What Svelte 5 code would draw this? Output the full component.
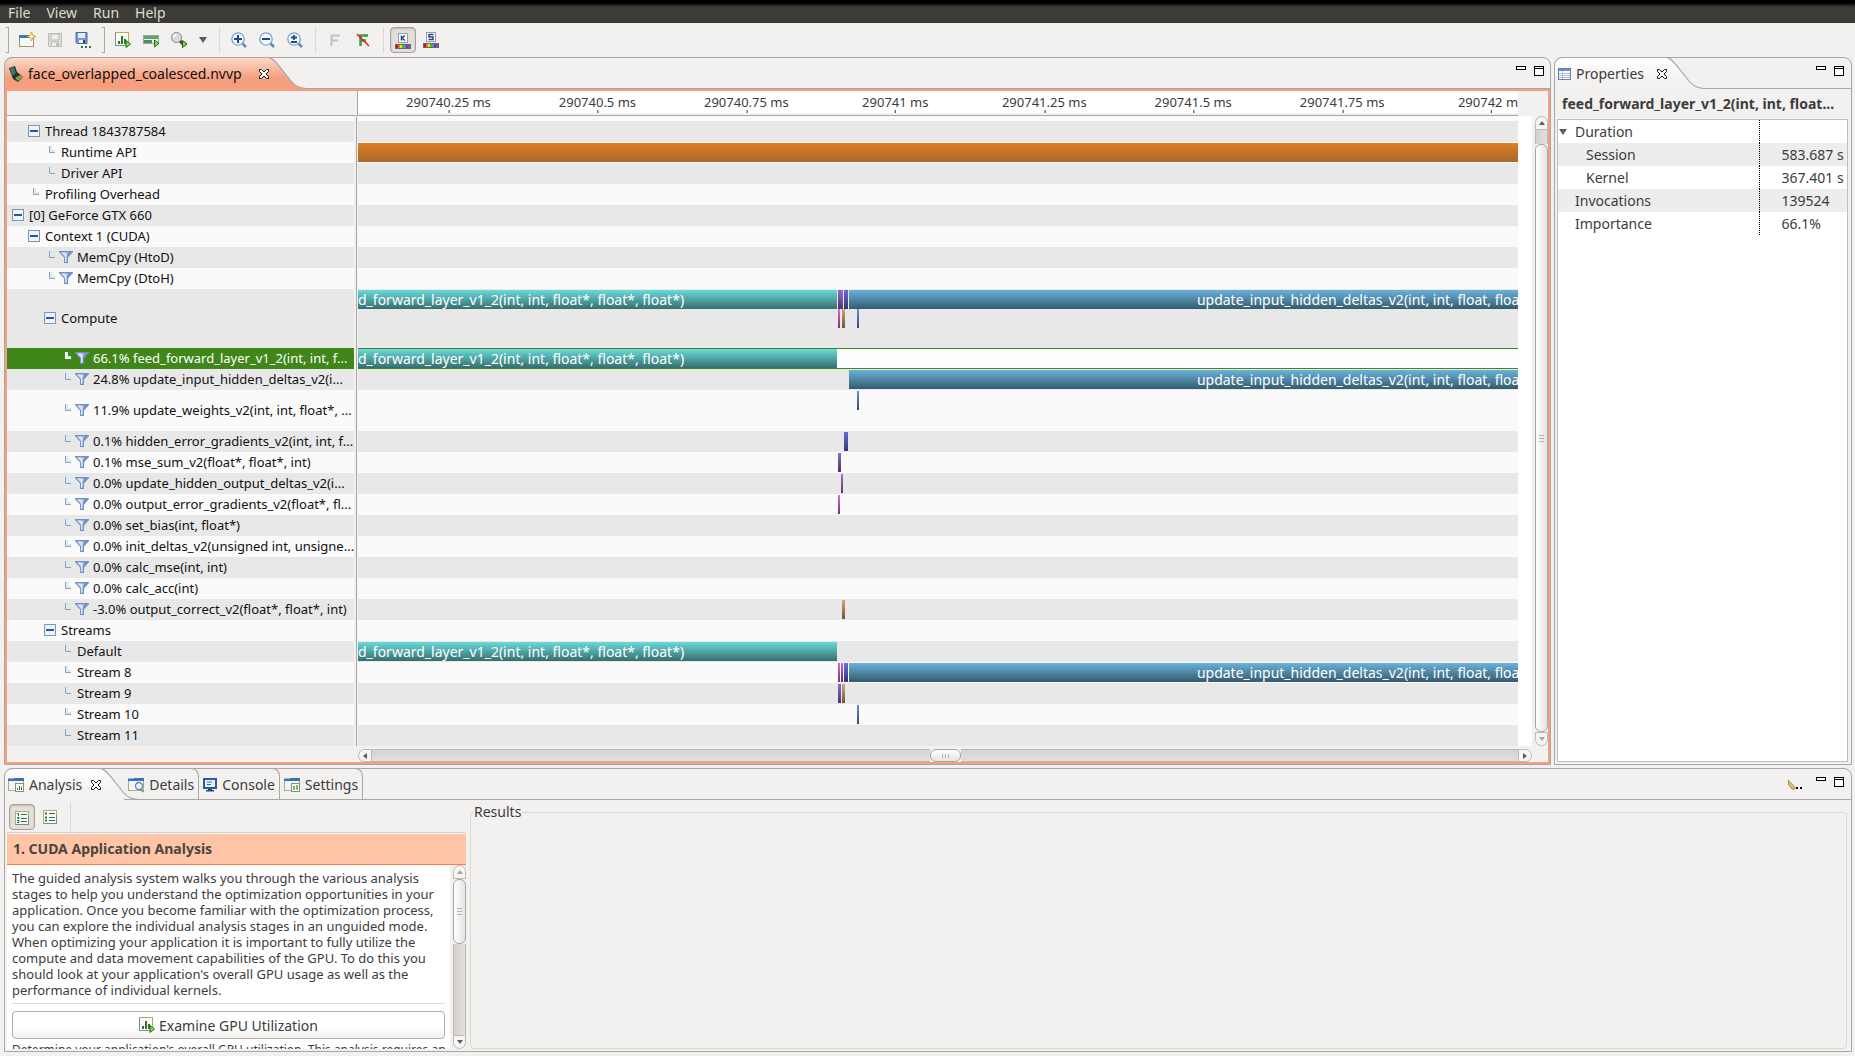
<script>
  const menus = ['File', 'View', 'Run', 'Help'];

  const span = 1160;
  const pct = (px) => (px / span) * 100;

  const fwd = { from: 0, to: 479, tone: 'teal', label: 'd_forward_layer_v1_2(int, int, float*, float*, float*)', align: 'start' };
  const upd = { from: 491, to: 1160, tone: 'blue', label: 'update_input_hidden_deltas_v2(int, int, float, float*, float*)', align: 'middle' };
  const bar = (from, to, tone, lane = 0) => ({ from, to, tone, lane });

  const rows = [
    { level: 1, text: 'Thread 1843787584', twisty: true },
    { level: 2, text: 'Runtime API', bars: [bar(0, 1160, 'orange')] },
    { level: 2, text: 'Driver API' },
    { level: 1, text: 'Profiling Overhead' },
    { level: 0, text: '[0] GeForce GTX 660', twisty: true },
    { level: 1, text: 'Context 1 (CUDA)', twisty: true },
    { level: 2, text: 'MemCpy (HtoD)', filter: true },
    { level: 2, text: 'MemCpy (DtoH)', filter: true },
    {
      level: 2, text: 'Compute', twisty: true, size: 'triple',
      bars: [fwd, bar(480, 483, 'purple'), bar(483, 485, 'violet'), bar(486, 490, 'indigo'), upd,
        bar(480, 482, 'pink', 1), bar(484, 487, 'tan', 1), bar(499, 501, 'steel', 1)]
    },
    { level: 3, text: '66.1% feed_forward_layer_v1_2(int, int, f...', filter: true, selected: true, bars: [fwd] },
    { level: 3, text: '24.8% update_input_hidden_deltas_v2(i...', filter: true, bars: [upd] },
    { level: 3, text: '11.9% update_weights_v2(int, int, float*, ...', filter: true, size: 'double', bars: [bar(499, 501, 'steel')] },
    { level: 3, text: '0.1% hidden_error_gradients_v2(int, int, f...', filter: true, bars: [bar(486, 490, 'indigo')] },
    { level: 3, text: '0.1% mse_sum_v2(float*, float*, int)', filter: true, bars: [bar(480, 483, 'purple')] },
    { level: 3, text: '0.0% update_hidden_output_deltas_v2(i...', filter: true, bars: [bar(483, 485, 'violet')] },
    { level: 3, text: '0.0% output_error_gradients_v2(float*, fl...', filter: true, bars: [bar(480, 482, 'pink')] },
    { level: 3, text: '0.0% set_bias(int, float*)', filter: true },
    { level: 3, text: '0.0% init_deltas_v2(unsigned int, unsigne...', filter: true },
    { level: 3, text: '0.0% calc_mse(int, int)', filter: true },
    { level: 3, text: '0.0% calc_acc(int)', filter: true },
    { level: 3, text: '-3.0% output_correct_v2(float*, float*, int)', filter: true, bars: [bar(484, 487, 'tan')] },
    { level: 2, text: 'Streams', twisty: true },
    { level: 3, text: 'Default', bars: [fwd] },
    { level: 3, text: 'Stream 8', bars: [bar(480, 482, 'pink'), bar(483, 485, 'violet'), bar(486, 490, 'indigo'), upd] },
    { level: 3, text: 'Stream 9', bars: [bar(480, 483, 'purple'), bar(484, 487, 'tan')] },
    { level: 3, text: 'Stream 10', bars: [bar(499, 501, 'steel')] },
    { level: 3, text: 'Stream 11' }
  ];

  const ticks = ['290740.25 ms', '290740.5 ms', '290740.75 ms', '290741 ms', '290741.25 ms', '290741.5 ms', '290741.75 ms', '290742 ms'];

  const properties = [
    { name: 'Duration', value: '', kind: 'group' },
    { name: 'Session', value: '583.687 s', kind: 'child' },
    { name: 'Kernel', value: '367.401 s', kind: 'child' },
    { name: 'Invocations', value: '139524', kind: '' },
    { name: 'Importance', value: '66.1%', kind: '' }
  ];

  const rainbow = ['#d01010', '#f07818', '#f8e010', '#30c818', '#18b0c8', '#b81890', '#7858a8'];
</script>

{#snippet windowIcon(kind)}
  <svg class="icon" width="16" height="16" viewBox="0 0 16 16">
    <rect x=".5" y="1.5" width="15" height="12" fill="#eef6fd" stroke="#b9a878" />
    <rect x="0" y="1" width="16" height="3" fill="#3a72b4" />
    <rect x="0" y="1" width="6" height="1" fill="#8fb8e0" />
    {#if kind === 'search'}
      <circle cx="11" cy="9" r="3.5" fill="#e8f4ff" stroke="#5d86b4" stroke-width="1.3" />
      <path d="M13 12l2.5 3" stroke="#5d86b4" stroke-width="1.8" />
    {:else}
      <rect x="7.5" y="6.5" width="8" height="8" fill="#fff" stroke="#8a9078" />
      {#if kind === 'bars'}
        <path d="M9.5 13v-2M11.5 13V9M13.5 13v-3" stroke="#2f7a3c" />
      {:else}
        <path d="M10 13V9M13 13V8" stroke="#4d9a2c" stroke-width="1.4" />
      {/if}
    {/if}
  </svg>
{/snippet}

{#snippet chartIcon()}
  <svg class="icon" width="16" height="16" viewBox="0 0 16 16">
    <rect x=".5" y=".5" width="13" height="13" fill="#fbfcf4" stroke="#b3a468" />
    <path d="M.5 14V1M1 13.500h12" stroke="#7e8c98" />
    <path d="M3 9h2v3H3zM6 4h2v8H6zM9 7h2v5H9z" fill="#2c7434" />
    <path d="M11 8.500l4.500 3.500-4.500 3.500z" fill="#7ee040" stroke="#1c7a10" />
  </svg>
{/snippet}

{#snippet closeIcon()}
  <svg width="10" height="10" viewBox="0 0 10 10">
    <path d="M.5.500h2L5 3 7.500.500h2v2L7 5l2.500 2.500v2h-2L5 7 2.500 9.500h-2v-2L3 5 .500 2.500z" fill="#fff" stroke="#111" />
  </svg>
{/snippet}

{#snippet windowButtons()}
  <button class="plain" aria-label="Minimize">
    <svg width="10" height="10" viewBox="0 0 10 10"><rect x=".5" y=".5" width="9" height="3" fill="#fff" stroke="#000" /></svg>
  </button>
  <button class="plain" aria-label="Maximize">
    <svg width="10" height="10" viewBox="0 0 10 10"><rect x=".5" y=".5" width="9" height="9" fill="#fff" stroke="#000" /><path d="M0 2.500h10" stroke="#000" /></svg>
  </button>
{/snippet}

{#snippet curve(hot)}
  <svg class="curve" width="38" height="32" viewBox="0 0 38 32">
    <defs>
      <linearGradient id={hot ? 'tab-hot' : 'tab-cool'} x1="0" y1="0" x2="0" y2="1">
        <stop offset="0" stop-color={hot ? '#fbd9cb' : '#ffffff'} />
        <stop offset=".65" stop-color={hot ? '#f59f7f' : '#f4f3f2'} />
        <stop offset="1" stop-color={hot ? '#f59f7f' : '#f2f1f0'} />
      </linearGradient>
    </defs>
    <path d="M0 .5C5 2 8 7 10 9L22 24C26 29 31 31.500 38 31.500V32H0z" fill="url(#{hot ? 'tab-hot' : 'tab-cool'})" />
    <path d="M0 .5C5 2 8 7 10 9L22 24C26 29 31 31.500 38 31.500" fill="none" stroke="#a9a7a4" stroke-width="1.2" />
  </svg>
{/snippet}

{#snippet zoomIcon(kind)}
  <svg class="icon" width="16" height="16" viewBox="0 0 16 16">
    <path d="M11 11l4 4" stroke="#5c8cc0" stroke-width="2.500" />
    <circle cx="7" cy="7" r="6.200" fill="#f4faff" stroke="#7aa4d4" stroke-width="1.300" />
    {#if kind === 'in'}<path d="M3 7h8M7 3v8" stroke="#1f4a8c" stroke-width="2" />{/if}
    {#if kind === 'out'}<path d="M3 7h8" stroke="#1f4a8c" stroke-width="2" />{/if}
    {#if kind === 'fit'}<path d="M4 5.500h6M7 3v5M4 10h6" stroke="#1f4a8c" stroke-width="1.800" />{/if}
  </svg>
{/snippet}

{#snippet colourIcon(path)}
  <svg class="icon" width="16" height="16" viewBox="0 0 16 16">
    <rect x="3.500" y=".5" width="9" height="9" fill="#fffdf0" stroke="#8ea0b4" />
    <path d={path} fill="none" stroke="#24488c" stroke-width="1.500" />
    <rect x="0" y="11" width="16" height="5" fill="#6a6484" />
    {#each rainbow as colour, i}
      <rect x={1 + i * 2} y="12" width="2" height="3" fill={colour} />
    {/each}
  </svg>
{/snippet}

{#snippet listIcon(numbered)}
  <svg class="icon" width="14" height="14" viewBox="0 0 14 14">
    <rect x=".5" y=".5" width="13" height="13" fill="#f6fafd" stroke="#b9a860" />
    <path d="M.5 13.500h13V5" fill="none" stroke="#7a8a8c" />
    <path d="M6 3.500h6M6 7.500h6M6 10.500h6" stroke="#2f7a44" />
    {#if numbered}
      <path d="M2 2.500h1.500V5M2 6.500h2v1H2.500M2 9.500h2v2H2" fill="none" stroke="#2f7a44" />
    {:else}
      <path d="M2 3.500h2M2 7.500h2M2 10.500h2" stroke="#2f7a44" stroke-width="2" />
    {/if}
  </svg>
{/snippet}

{#snippet arrow(dir, dim)}
  <span class="arrow {dir}" class:dim></span>
{/snippet}

<div class="app">
  <nav class="menubar">
    {#each menus as menu}<button class="plain">{menu}</button>{/each}
  </nav>

  <div class="toolbar" role="toolbar" aria-label="Main">
    <span class="handle"></span>
    <button class="tool" aria-label="New session">
      <svg class="icon" width="17" height="16" viewBox="0 0 17 16">
        <rect x=".5" y="3.500" width="14" height="11" fill="#f3f8fd" stroke="#a89458" />
        <rect x="0" y="3" width="11" height="3" fill="#3a78b8" />
        <path d="M12.500 0l1.200 3.300L17 4.500l-3.300 1.200L12.500 9l-1.200-3.300L8 4.500l3.300-1.200z" fill="#fff6c8" stroke="#c49a28" stroke-width=".8" />
      </svg>
    </button>
    <button class="tool" aria-label="Save" disabled>
      <svg class="icon" width="16" height="16" viewBox="0 0 16 16">
        <path d="M1.500 1.500h13v13h-12l-1-1z" fill="#dddcda" stroke="#bdbbb8" />
        <path d="M4 2h8v6H4zM4.500 10h7v4.500h-7z" fill="#efeeec" stroke="#bdbbb8" />
        <path d="M9 11h2v3H9z" fill="#bdbbb8" />
      </svg>
    </button>
    <button class="tool" aria-label="Save as">
      <svg class="icon" width="17" height="16" viewBox="0 0 17 16">
        <path d="M1 .5h11v11H2l-1-1z" fill="#7d9bcc" stroke="#4a6aa6" />
        <path d="M3 1h7v5H3z" fill="#e4ecf7" /><path d="M4 8h6v3H4z" fill="#f4f7fa" /><path d="M8 8h2v3H8z" fill="#24406c" />
        <path d="M6 14h2v2H6zM10 14h2v2h-2zM14 14h2v2h-2z" fill="#2e7a34" />
      </svg>
    </button>
    <span class="handle second"></span>
    <button class="tool" aria-label="Profile application">{@render chartIcon()}</button>
    <button class="tool" aria-label="Timeline run">
      <svg class="icon" width="17" height="16" viewBox="0 0 17 16">
        <rect x=".5" y="3.500" width="15" height="8" fill="#f5f5f5" stroke="#9aa4a8" />
        <rect x="1" y="4" width="14" height="3" fill="#5ea568" /><rect x="1" y="8" width="8" height="3" fill="#4c8f58" />
        <path d="M11.500 8l4.500 3.500-4.500 3.500z" fill="#7ee040" stroke="#1c7a10" />
      </svg>
    </button>
    <button class="tool" aria-label="Analyze">
      <svg class="icon" width="17" height="16" viewBox="0 0 17 16">
        <path d="M9 9l3 3" stroke="#4a4238" stroke-width="3" />
        <circle cx="5.500" cy="5.500" r="5" fill="#dcdcdc" stroke="#858585" />
        <path d="M2.500 5.500a3 3 0 0 1 3-3" fill="none" stroke="#fff" stroke-width="1.500" />
        <path d="M11.500 8.500l4.500 3.500-4.500 3.500z" fill="#7ee040" stroke="#1c5a10" />
      </svg>
    </button>
    <button class="tool drop" aria-label="Analyze options">{@render arrow('down', false)}</button>
    <span class="rule"></span>
    <button class="tool" aria-label="Zoom in">{@render zoomIcon('in')}</button>
    <button class="tool" aria-label="Zoom out">{@render zoomIcon('out')}</button>
    <button class="tool" aria-label="Zoom to fit">{@render zoomIcon('fit')}</button>
    <span class="rule"></span>
    <button class="tool" aria-label="Filter" disabled>
      <svg class="icon" width="12" height="14" viewBox="0 0 12 14"><path d="M2.500 13V2.500H11M2.500 7.500H9" fill="none" stroke="#c4c2bf" stroke-width="2" /></svg>
    </button>
    <button class="tool" aria-label="Clear filter">
      <svg class="icon" width="14" height="14" viewBox="0 0 14 14"><path d="M4.500 13V2.500H12M4.500 7.500H10" fill="none" stroke="#3a9a44" stroke-width="2.500" /><path d="M1 1l12 12" stroke="#f01414" stroke-width="1.500" /></svg>
    </button>
    <span class="rule"></span>
    <button class="tool pressed" aria-label="Colour by kernel" aria-pressed="true">{@render colourIcon('M6.500 2.500v5M10 2.500L7 5l3 2.500')}</button>
    <button class="tool" aria-label="Colour by stream">{@render colourIcon('M10.500 2.500H6V5h4v2.500H5.500')}</button>
  </div>

  <main class="upper">
    <section class="folder editor">
      <header class="tabs">
        <div class="tab hot">
          <svg class="icon" width="14" height="16" viewBox="0 0 14 16">
            <path d="M0 2l6-2 2 6 6 5-5 5-5-3z" fill="#1f3434" /><path d="M1 2l4-1 2 6-4 3z" fill="#3f7468" /><path d="M9 15l5-4-3-2-5 3z" fill="#86a040" />
          </svg>
          <span class="title">face_overlapped_coalesced.nvvp</span>
          <button class="plain" aria-label="Close">{@render closeIcon()}</button>
        </div>
        {@render curve(true)}
        <div class="rest">{@render windowButtons()}</div>
      </header>

      <div class="editor-body">
        <div class="corner"></div>
        <div class="ruler">
          {#each ticks as tick, i}
            <span class="tick" style="left: {7.8 + i * 12.84}%">{tick}</span>
          {/each}
        </div>
        <ul class="tree">
          {#each rows as row}
            <li class="row {row.size ?? ''} level-{row.level}" class:selected={row.selected}>
              {#if row.twisty}
                <button class="plain twisty" aria-label="Collapse {row.text}"></button>
              {:else}
                <svg class="leaf" width="7" height="7" viewBox="0 0 7 7">
                  <path d="M1 0h2v4h3v2H1z" fill="#d8ebf5" />
                  <path d="M.5 0v6.500H6" fill="none" stroke={row.selected ? '#fff' : '#8fa3ba'} />
                </svg>
              {/if}
              {#if row.filter}
                <svg class="funnel" width="14" height="12" viewBox="0 0 14 12">
                  <path d="M0 0h14v1L9 6.500V12H5V6.500L0 1z" fill="#7191c4" />
                  <path d="M2 1.500h7L7.500 6v5H6V6z" fill="#c6d8ef" />
                  <path d="M3 2h3l.8 4.500V10" fill="none" stroke="#f2f7fd" stroke-width=".8" />
                </svg>
              {/if}
              <span>{row.text}</span>
            </li>
          {/each}
        </ul>
        <div class="sash"></div>
        <div class="lanes">
          {#each rows as row}
            <div class="row {row.size ?? ''}" class:selected={row.selected}>
              {#each row.bars ?? [] as b}
                <div class="bar {b.tone}" class:second-lane={b.lane === 1} style="left: {pct(b.from)}%; width: {pct(b.to - b.from)}%">
                  {#if b.label}<span class="label {b.align}">{b.label}</span>{/if}
                </div>
              {/each}
            </div>
          {/each}
        </div>
        <div class="gutter"></div>
        <div class="scroll vertical">
          <span class="cap">{@render arrow('up', false)}</span>
          <span class="trough short"></span>
          <span class="thumb long"><i></i></span>
          <span class="cap">{@render arrow('down', true)}</span>
        </div>
        <div class="scroll horizontal">
          <span class="cap">{@render arrow('left', false)}</span>
          <span class="trough"></span>
          <span class="thumb"><i></i></span>
          <span class="trough"></span>
          <span class="cap">{@render arrow('right', false)}</span>
        </div>
      </div>
    </section>

    <section class="folder properties">
      <header class="tabs">
        <div class="tab">
          <svg class="icon" width="13" height="12" viewBox="0 0 13 12">
            <rect x=".5" y=".5" width="12" height="11" fill="#fff" stroke="#6a80a8" /><rect x="1" y="1" width="11" height="2" fill="#6f8cc0" />
            <path d="M1 5.500h11M1 7.500h11M1 9.500h11M4.500 3v8" stroke="#a8bada" />
          </svg>
          <span class="title">Properties</span>
          <button class="plain" aria-label="Close">{@render closeIcon()}</button>
        </div>
        {@render curve(false)}
        <div class="rest">{@render windowButtons()}</div>
      </header>
      <h2>feed_forward_layer_v1_2(int, int, float...</h2>
      <div class="sheet">
        <table>
          <tbody>
            {#each properties as p}
              <tr>
                <th scope="row" class={p.kind}>{#if p.kind === 'group'}{@render arrow('down', false)}{/if}<span>{p.name}</span></th>
                <td>{p.value}</td>
              </tr>
            {/each}
          </tbody>
        </table>
      </div>
    </section>
  </main>

  <section class="folder lower">
    <header class="tabs">
      <div class="tab">
        {@render windowIcon('bars')}
        <span class="title">Analysis</span>
        <button class="plain" aria-label="Close">{@render closeIcon()}</button>
      </div>
      {@render curve(false)}
      <button class="side-tab first">{@render windowIcon('search')}<span>Details</span></button>
      <button class="side-tab">
        <svg class="icon" width="14" height="14" viewBox="0 0 14 14">
          <rect x="1" y="1" width="12" height="9" fill="#e9f1fb" stroke="#2c5a9c" stroke-width="2" /><path d="M4 4h5M4 6.500h4" stroke="#3a68a8" /><path d="M5 11h4v1h2v1.500H3V12h2z" fill="#24487c" />
        </svg>
        <span>Console</span>
      </button>
      <button class="side-tab">{@render windowIcon('settings')}<span>Settings</span></button>
      <div class="rest">
        <button class="plain pencil" aria-label="Reset analysis">
          <svg width="15" height="13" viewBox="0 0 15 13"><path d="M0 3l7 7.500V12H4L0 7z" fill="#e8c078" stroke="#7a5c24" stroke-width=".7" /><path d="M8 10h2v2H8zM12 10h2v2h-2z" fill="#000" /></svg>
        </button>
        {@render windowButtons()}
      </div>
    </header>

    <div class="analysis">
      <div class="guide">
        <div class="guide-tools">
          <button class="tool pressed" aria-label="Guided analysis" aria-pressed="true">{@render listIcon(true)}</button>
          <button class="tool" aria-label="Unguided analysis">{@render listIcon(false)}</button>
          <span class="rule"></span>
        </div>
        <h3>1. CUDA Application Analysis</h3>
        <div class="guide-body">
          <div class="prose">
            <p>
              The guided analysis system walks you through the various analysis<br />
              stages to help you understand the optimization opportunities in your<br />
              application. Once you become familiar with the optimization process,<br />
              you can explore the individual analysis stages in an unguided mode.<br />
              When optimizing your application it is important to fully utilize the<br />
              compute and data movement capabilities of the GPU. To do this you<br />
              should look at your application's overall GPU usage as well as the<br />
              performance of individual kernels.
            </p>
            <hr />
            <button class="examine">{@render chartIcon()}<span>Examine GPU Utilization</span></button>
            <p class="next">Determine your application's overall GPU utilization. This analysis requires an</p>
          </div>
          <div class="scroll vertical">
            <span class="cap">{@render arrow('up', true)}</span>
            <span class="thumb guide-thumb"><i></i></span>
            <span class="trough"></span>
            <span class="cap">{@render arrow('down', false)}</span>
          </div>
        </div>
      </div>
      <fieldset>
        <legend>Results</legend>
      </fieldset>
    </div>
  </section>
</div>

<style>
  :global(body) { background: #f2f1f0; }

  .app {
    box-sizing: border-box;
    height: 100vh;
    display: flex;
    flex-direction: column;
    overflow: hidden;
    font-family: "Noto Sans", "Open Sans", sans-serif;
    font-size: 14px;
    color: #3c3c3c;
    background: #f2f1f0;
  }
  .app :global(*) { box-sizing: border-box; }
  button { font: inherit; color: inherit; }
  svg { display: block; flex: none; }
  .plain { display: block; flex: none; padding: 0; border: 0; background: none; }

  .menubar {
    flex: none;
    display: flex;
    gap: 16px;
    height: 23px;
    padding: 1px 8px 0;
    color: #dfdbd2;
    background: linear-gradient(#000 0 3px, #3c3b37 7px);
  }

  .toolbar { flex: none; display: flex; align-items: center; height: 34px; padding: 0 6px; }
  .handle { width: 3px; height: 26px; margin-right: 5px; border: 1px solid #aaa8a5; border-left: 0; }
  .handle.second { margin: 0 5px 0 4px; }
  .tool {
    display: grid;
    place-items: center;
    flex: none;
    width: 26px;
    height: 26px;
    margin-right: 2px;
    padding: 0;
    border: 1px solid transparent;
    border-radius: 4px;
    background: none;
  }
  .pressed { border-color: #a5a19c; background: #e2dfdc; box-shadow: inset 0 1px 2px #bbb8b4; padding-top: 2px; }
  .drop { width: 18px; }
  .rule { width: 1px; height: 26px; margin: 0 6px 0 5px; background: #dcdad7; }

  .arrow { display: block; width: 0; height: 0; border: 4px solid transparent; }
  .arrow.down { border-top: 6px solid #5e5c58; border-bottom: 0; }
  .arrow.up { border-width: 3px; border-bottom: 4px solid #5e5c58; border-top: 0; }
  .arrow.left { border-width: 3px; border-right: 4px solid #5e5c58; border-left: 0; }
  .arrow.right { border-width: 3px; border-left: 4px solid #5e5c58; border-right: 0; }
  .scroll .arrow.down { border-width: 4px 3px 0; }
  .arrow.down.dim { border-top-color: #aaa7a3; }
  .arrow.up.dim { border-bottom-color: #aaa7a3; }

  .upper { flex: none; display: grid; grid-template-columns: minmax(0, 1fr) 298px; gap: 3px; padding: 0 3px 0 4px; }
  .folder { display: flex; flex-direction: column; min-width: 0; border: 1px solid #a9a7a4; border-radius: 8px 8px 0 0; }

  .tabs { flex: none; display: flex; height: 32px; margin-top: -1px; }
  .tab {
    display: flex;
    align-items: center;
    padding-left: 3px;
    border-top: 1px solid #a9a7a4;
    border-radius: 8px 0 0 0;
    background: linear-gradient(#fff, #f4f3f2 65%, #f2f1f0);
  }
  .tab.hot { color: #111; padding-left: 4px; background: linear-gradient(#fbd9cb, #f59f7f 65%); }
  .title { margin: 0 9px 0 5px; white-space: nowrap; }
  .hot .title { margin-right: 17px; }
  .properties .title { margin-right: 13px; }
  .rest {
    flex: 1;
    display: flex;
    justify-content: flex-end;
    align-items: flex-start;
    gap: 8px;
    padding: 9px 7px 0 0;
    border-bottom: 1px solid #a9a7a4;
  }
  .editor .rest { padding-right: 6px; }
  .pencil { margin-right: 5px; }
  .side-tab {
    display: flex;
    align-items: center;
    gap: 5px;
    padding: 1px 4px 0;
    border: 1px solid #a9a7a4;
    border-left: 0;
    border-radius: 0 8px 0 0;
    background: none;
  }
  .side-tab.first { margin-left: -15px; }

  .editor-body {
    display: grid;
    grid-template-columns: 349px 2px minmax(0, 1fr) 14px 3px 13px;
    grid-template-rows: 25px auto 16px;
    border: 2px solid #f59f7f;
  }
  .corner { grid-area: 1 / 1 / 2 / 2; border-bottom: 1px solid #a9a7a4; }
  .ruler {
    grid-area: 1 / 2 / 2 / 4;
    position: relative;
    overflow: hidden;
    margin-left: 1px;
    border: solid #a9a7a4;
    border-width: 0 0 1px 1px;
    background: linear-gradient(#fff 0 22px, #f2f1f0 22px);
  }
  .tick { position: absolute; top: 4px; transform: translateX(-50%); height: 18px; font-size: 13px; line-height: 15px; white-space: nowrap; }
  .tick::after { content: ""; position: absolute; left: 50%; bottom: 0; width: 1px; height: 3px; background: #333; }

  .tree { grid-area: 2 / 1 / 3 / 2; margin: 0 2px 0 0; padding: 5px 0 0; list-style: none; font-size: 13px; color: #111; overflow: hidden; background: #fafafa; }
  .sash { grid-area: 2 / 2 / 3 / 3; border-left: 1px solid #a9a7a4; }
  .lanes { grid-area: 2 / 3 / 3 / 4; padding-top: 5px; background: #fafafa; overflow: hidden; }
  .row { position: relative; height: 21px; background: #fafafa; }
  .row:nth-child(odd) { background: #e8e8e8; }
  .row.double { height: 41px; }
  .row.triple { height: 59px; }
  .tree .row { display: flex; align-items: center; padding-bottom: 1px; white-space: nowrap; overflow: hidden; }
  .tree .row.selected { color: #fff; background: #40861b; }
  .lanes .row.selected { background: #fcfffc; box-shadow: inset 0 1px #40861b, inset 0 -1px #40861b; }
  .level-0 { padding-left: 5px; }
  .level-1 { padding-left: 21px; }
  .level-2 { padding-left: 37px; }
  .level-3 { padding-left: 53px; }
  .twisty { width: 12px; height: 12px; margin-right: 5px; border: 1px solid #7f95b4; background: linear-gradient(#2f5599, #2f5599) center / 8px 2px no-repeat #eaf5fd; }
  .leaf { margin: -5px 5px 0 5px; }
  .funnel { margin: 0 4px 0 -2px; }

  .bar { position: absolute; top: 1px; height: 19px; overflow: hidden; }
  .bar.second-lane { top: 20px; }
  .teal { background: linear-gradient(#6adada, #356e6e); }
  .blue { background: linear-gradient(#6ab2da, #355a6e); }
  .orange { background: linear-gradient(#df7e22, #a8692f); }
  .purple { background: linear-gradient(#8a6ada, #46356e); }
  .violet { background: linear-gradient(#b26ada, #5a356e); }
  .indigo { background: linear-gradient(#6a6ada, #35356e); }
  .pink { background: linear-gradient(#da6ada, #6e356e); }
  .tan { background: linear-gradient(#daa66a, #6e5435); }
  .steel { background: linear-gradient(#6a8eda, #35486e); }
  .label { display: block; color: #fff; font-size: 14px; line-height: 19px; white-space: nowrap; }
  .label.middle { padding-left: 52%; }

  .gutter { grid-area: 2 / 4 / 3 / 5; background: #fff; }
  .scroll { display: flex; }
  .vertical { flex-direction: column; width: 13px; border-radius: 7px; }
  .editor .vertical { grid-area: 2 / 6 / 3 / 7; }
  .horizontal { grid-area: 3 / 3 / 4 / 5; height: 13px; margin-top: 3px; }
  .cap { flex: none; display: grid; place-items: center; border: 1px solid #bcb9b5; background: #f6f5f4; }
  .vertical .cap { height: 14px; }
  .vertical .cap:first-child { border-radius: 7px 7px 0 0; }
  .vertical .cap:last-child { border-radius: 0 0 7px 7px; }
  .horizontal .cap { width: 14px; }
  .horizontal .cap:first-child { border-radius: 7px 0 0 7px; }
  .horizontal .cap:last-child { border-radius: 0 7px 7px 0; }
  .trough { flex: 1; border: 1px solid #bcb9b5; background: linear-gradient(90deg, #d3d0cd, #e2e0de); }
  .horizontal .trough { border-width: 1px 0; background: linear-gradient(#d6d4d1, #e2e0de); }
  .vertical .trough { border-width: 0 1px; }
  .vertical .trough.short { flex: none; height: 14px; }
  .thumb { flex: none; display: grid; place-items: center; border: 1px solid #a8a5a1; border-radius: 6px; background: linear-gradient(90deg, #fff, #e6e4e2); }
  .thumb.long { flex: 1; }
  .guide-thumb { height: 65px; }
  .horizontal .thumb { width: 31px; background: linear-gradient(#fff, #e6e4e2); }
  .thumb i { width: 5px; height: 7px; background: repeating-linear-gradient(#b5b2ae 0 1px, transparent 1px 3px); }
  .horizontal .thumb i { width: 7px; height: 4px; background: repeating-linear-gradient(90deg, #b5b2ae 0 1px, transparent 1px 3px); }

  h2 { margin: 0; padding: 0 3px 0 7px; font-size: 14px; line-height: 30px; white-space: nowrap; overflow: hidden; }
  .sheet { flex: 1; margin: 0 3px 2px 2px; border: 1px solid #c0beba; background: #fff; }
  table { width: 100%; table-layout: fixed; border-collapse: collapse; }
  tr { height: 23px; }
  tr:nth-child(even) { background: #ededed; }
  th, td { padding: 0; font-weight: normal; text-align: left; white-space: nowrap; line-height: 23px; }
  th { padding-left: 17px; }
  th.child { padding-left: 28px; }
  th.group { display: flex; align-items: center; gap: 8px; padding-left: 1px; }
  td { width: 88px; padding-left: 22px; border-left: 1px dotted #000; }

  .lower { flex: 1; min-height: 0; margin: 3px 3px 4px 4px; }
  .analysis { flex: 1; min-height: 0; display: flex; gap: 4px; padding: 0 4px 2px 2px; }
  .guide { flex: none; display: flex; flex-direction: column; width: 459px; }
  .guide-tools { flex: none; display: flex; align-items: center; height: 33px; padding: 1px 0 0 2px; border-bottom: 1px solid #d5d3d0; }
  .guide-tools .rule { height: 29px; margin-left: 5px; }
  h3 { flex: none; margin: 1px 0 0; padding-left: 6px; font-size: 14px; line-height: 30px; color: #4a4542; background: #ffc5a6; border-bottom: 1px solid #f08050; }
  .guide-body { flex: 1; min-height: 0; display: flex; gap: 3px; }
  .prose { flex: 1; min-width: 0; overflow: hidden; padding: 5px 5px 0; background: #fff; }
  p { margin: 0; font-size: 13px; line-height: 16px; white-space: nowrap; }
  .next { font-size: 12px; }
  hr { margin: 5px 0 7px; border: 0; border-top: 1px solid #dedcda; }
  .examine {
    display: flex;
    align-items: center;
    justify-content: center;
    gap: 4px;
    width: 100%;
    height: 28px;
    margin-bottom: 3px;
    padding: 0;
    border: 1px solid #b0adaa;
    border-radius: 4px;
    background: linear-gradient(#fff 60%, #f0efee);
  }
  fieldset { flex: 1; min-width: 0; margin: 0; padding: 0 0 0 2px; border: 1px solid #dad8d5; border-radius: 4px; }
  legend { padding: 0 1px; line-height: 24px; }
</style>
